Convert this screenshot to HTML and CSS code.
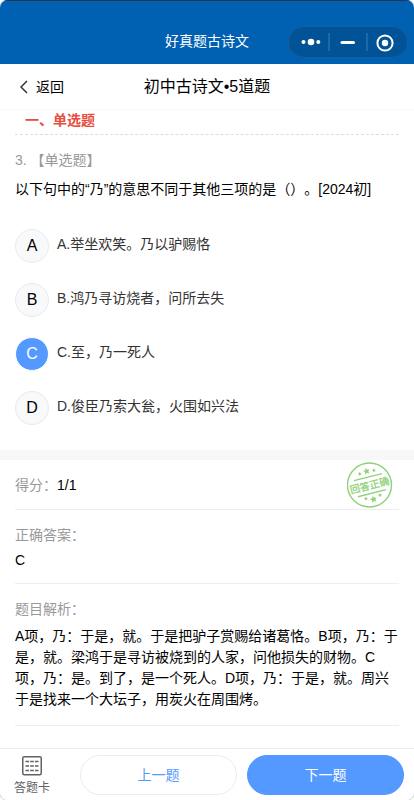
FILE: index.html
```html
<!DOCTYPE html>
<html lang="zh-CN">
<head>
    <meta charset="UTF-8">
    <meta name="viewport" content="width=device-width, initial-scale=1.0">
    <title>好真题古诗文</title>
    <link rel="stylesheet" href="styles.css">
</head>
<body>
    <div class="app">
        <div class="titlebar">
            <div class="app-name">好真题古诗文</div>
            <div class="capsule">
                <svg width="120" height="32" viewBox="0 0 120 32">
                    <g fill="#fff">
                        <circle cx="15.5" cy="16" r="2"/>
                        <circle cx="23" cy="16" r="3.3"/>
                        <circle cx="30.3" cy="16" r="2"/>
                        <rect x="52.5" y="15" width="14.5" height="3" rx="1.5"/>
                        <circle cx="97" cy="17" r="3.2"/>
                    </g>
                    <path d="M41 7v18M79 7v18" stroke="#266fae" stroke-width="1.5"/>
                    <circle cx="97" cy="17" r="7.6" fill="none" stroke="#fff" stroke-width="2"/>
                </svg>
            </div>
        </div>

        <div class="nav">
            <div class="back">
                <svg width="8" height="14" viewBox="0 0 8 14"><path d="M7 1L1 7l6 6" fill="none" stroke="#333" stroke-width="1.5"/></svg>
                <span>返回</span>
            </div>
            <div class="nav-title">初中古诗文•5道题</div>
        </div>

        <div class="question">
            <div class="section">一、单选题</div>
            <div class="type">3. 【单选题】</div>
            <div class="stem">以下句中的“乃”的意思不同于其他三项的是（）。[2024初]</div>
            <div class="options">
                <div class="option"><span class="letter">A</span><span class="text">A.举坐欢笑。乃以驴赐恪</span></div>
                <div class="option"><span class="letter">B</span><span class="text">B.鸿乃寻访烧者，问所去失</span></div>
                <div class="option active"><span class="letter">C</span><span class="text">C.至，乃一死人</span></div>
                <div class="option"><span class="letter">D</span><span class="text">D.俊臣乃索大瓮，火围如兴法</span></div>
            </div>
        </div>

        <div class="result">
            <div class="score">
                <div><span class="label">得分：</span>1/1</div>
                <svg class="stamp" width="46" height="46" viewBox="0 0 46 46">
                    <circle cx="22.5" cy="23" r="22" fill="none" stroke="#8fd178" stroke-width="1.4"/>
                    <g transform="rotate(-14 23 23)">
                        <path d="M8.5 14.8h29M8.5 31.5h29" stroke="#8fd178" stroke-width="1.3"/>
                        <text x="22.5" y="27" text-anchor="middle">回答正确</text>
                        <g fill="#8fd178">
                            <path id="star" d="M23 5.2l1 2.3 2.5.2-1.9 1.6.6 2.5-2.2-1.4-2.2 1.4.6-2.5-1.9-1.6 2.5-.2z"/>
                            <use href="#star" transform="translate(0 29)"/>
                            <use href="#star" transform="translate(2 4.5) scale(.6)"/>
                            <use href="#star" transform="translate(16.5 4.5) scale(.6)"/>
                            <use href="#star" transform="translate(2 30) scale(.6)"/>
                            <use href="#star" transform="translate(16.5 30) scale(.6)"/>
                        </g>
                    </g>
                </svg>
            </div>
            <div class="answer">
                <div class="label">正确答案：</div>
                <div class="value">C</div>
            </div>
            <div class="analysis">
                <div class="label">题目解析：</div>
                <div class="value">A项，乃：于是，就。于是把驴子赏赐给诸葛恪。B项，乃：于是，就。梁鸿于是寻访被烧到的人家，问他损失的财物。C项，乃：是。到了，是一个死人。D项，乃：于是，就。周兴于是找来一个大坛子，用炭火在周围烤。</div>
            </div>
        </div>

        <div class="footer">
            <div class="card">
                <svg width="20" height="20" viewBox="0 0 20 20" fill="none" stroke="#606266">
                    <rect x=".75" y=".75" width="18.5" height="18" rx="1.5" stroke-width="1.5"/>
                    <path d="M3.5 5.5h13M3.5 10h13M3.5 14.5h13" stroke-width="1.4" stroke-dasharray="3.6 1.1"/>
                </svg>
                <span>答题卡</span>
            </div>
            <button class="btn">上一题</button>
            <button class="btn primary">下一题</button>
        </div>
    </div>
</body>
</html>
```

FILE: styles.css
```css
* {
    box-sizing: border-box;
}
body {
    margin: 0;
    background: #fff;
    color: #000;
    font-family: "Liberation Sans", "Noto Sans CJK SC", sans-serif;
    font-size: 14px;
    line-height: 21px;
    text-spacing-trim: space-all;
}
svg {
    display: block;
}
.app {
    display: flex;
    flex-direction: column;
    height: 800px;
    overflow: hidden;
    border-radius: 8px;
    background: #fff;
    box-shadow: 0 0 0 1px #ddd;
}
.titlebar {
    display: grid;
    grid-template-columns: 1fr auto 1fr;
    align-items: center;
    height: 64px;
    padding: 18px 6px 0;
    border-top: 1px solid #2c3352;
    background: #0061b2;
    color: #fff;
}
.app-name {
    grid-column: 2;
}
.capsule {
    justify-self: end;
    width: 120px;
    height: 32px;
    margin-top: 1px;
    border-radius: 16px;
    background: #005397;
    box-shadow: inset 0 0 0 1px #175f9f;
}
.nav {
    display: grid;
    grid-template-columns: 1fr auto 1fr;
    align-items: center;
    height: 46px;
    padding: 0 20px;
    border-bottom: 1px solid #f8f8f8;
}
.back {
    display: flex;
    align-items: center;
    gap: 8px;
    padding-top: 1px;
}
.nav-title {
    font-size: 16px;
}
.question {
    height: 340px;
    padding: 0 15px;
}
.section {
    height: 25px;
    padding-left: 10px;
    border-bottom: 1px dashed #ddd;
    color: #e74c3c;
    font-weight: bold;
}
.type {
    margin-top: 15px;
    color: #999;
}
.stem {
    margin-top: 8px;
}
.options {
    display: flex;
    flex-direction: column;
    gap: 20px;
    margin-top: 29px;
}
.option {
    display: flex;
    align-items: center;
    gap: 8px;
    height: 34px;
    color: #333;
}
.letter {
    width: 34px;
    height: 34px;
    border: 1px solid #e9eaec;
    border-radius: 50%;
    background: #f8f9fb;
    color: #000;
    font-size: 16px;
    line-height: 32px;
    text-align: center;
}
.option .text {
    padding-bottom: 3px;
}
.active .letter {
    border-color: #fff;
    background: #5499ff;
    color: #fff;
}
.result {
    flex: 1;
    padding: 0 15px;
    border-top: 10px solid #f7f7f7;
}
.label {
    color: #999;
}
.score {
    display: flex;
    align-items: center;
    justify-content: space-between;
    height: 50px;
    padding: 1px 6px 0 0;
    border-bottom: 1px solid #eee;
}
.stamp text {
    fill: #8fd178;
    stroke: #8fd178;
    stroke-width: 0.3px;
    font-size: 10px;
}
.answer {
    height: 74px;
    padding-top: 15px;
    border-bottom: 1px solid #eee;
}
.answer .value {
    margin-top: 4px;
}
.analysis {
    height: 142px;
    padding-top: 15px;
    border-bottom: 1px solid #eee;
}
.analysis .value {
    margin-top: 6px;
}
.footer {
    display: flex;
    height: 52px;
    padding: 6px 10px 0 14px;
    border-top: 1px solid #ebebee;
}
.card {
    display: flex;
    flex-direction: column;
    align-items: center;
    gap: 2px;
    width: 36px;
    margin-right: 30px;
    padding-top: 1px;
    color: #606266;
    font-size: 12px;
}
.btn {
    width: 157px;
    height: 40px;
    margin-right: 10px;
    padding: 0;
    border: 1px solid #ebebee;
    border-radius: 20px;
    background: #fff;
    color: #5499ff;
    font: inherit;
}
.btn.primary {
    margin-right: 0;
    border-color: #5499ff;
    background: #5499ff;
    color: #fff;
}
```
